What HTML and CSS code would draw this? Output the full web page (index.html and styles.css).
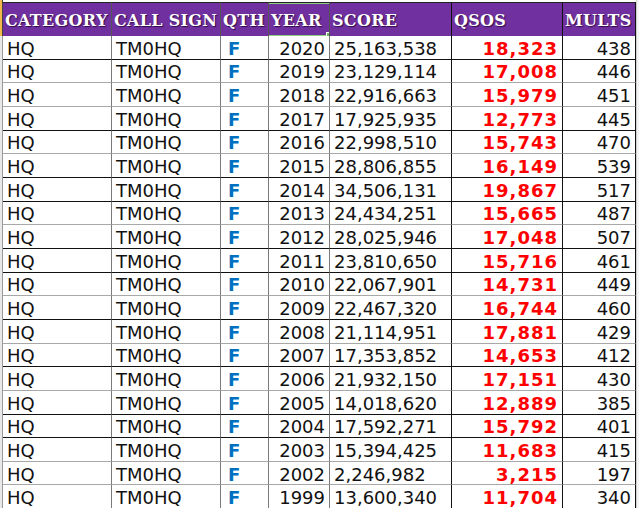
FILE: index.html
```html
<!DOCTYPE html>
<html>
<head>
<meta charset="utf-8">
<link rel="stylesheet" href="styles.css">
</head>
<body>
<div class="sheet">
  <div class="rowhead">
    <div class="rh-top"></div>
    <div class="rh-body"></div>
  </div>
  <div class="grid">
    <div class="hd">CATEGORY</div>
    <div class="hd">CALL SIGN</div>
    <div class="hd">QTH</div>
    <div class="hd sel">YEAR<span class="selbox"><span class="handle"></span></span></div>
    <div class="hd dk">SCORE</div>
    <div class="hd dk">QSOS</div>
    <div class="hd dk">MULTS</div>
  </div>
  <div class="grid body">
    <div class="c dark">HQ</div><div class="c dark">TM0HQ</div><div class="c q dark">F</div><div class="c r dark">2020</div><div class="c dk dark">25,163,538</div><div class="c r red dk dark">18,323</div><div class="c r dk dark">438</div>
    <div class="c">HQ</div><div class="c">TM0HQ</div><div class="c q">F</div><div class="c r">2019</div><div class="c dk">23,129,114</div><div class="c r red dk">17,008</div><div class="c r dk">446</div>
    <div class="c">HQ</div><div class="c">TM0HQ</div><div class="c q">F</div><div class="c r">2018</div><div class="c dk">22,916,663</div><div class="c r red dk">15,979</div><div class="c r dk">451</div>
    <div class="c dark">HQ</div><div class="c dark">TM0HQ</div><div class="c q dark">F</div><div class="c r dark">2017</div><div class="c dk dark">17,925,935</div><div class="c r red dk dark">12,773</div><div class="c r dk dark">445</div>
    <div class="c">HQ</div><div class="c">TM0HQ</div><div class="c q">F</div><div class="c r">2016</div><div class="c dk">22,998,510</div><div class="c r red dk">15,743</div><div class="c r dk">470</div>
    <div class="c dark">HQ</div><div class="c dark">TM0HQ</div><div class="c q dark">F</div><div class="c r dark">2015</div><div class="c dk dark">28,806,855</div><div class="c r red dk dark">16,149</div><div class="c r dk dark">539</div>
    <div class="c dark">HQ</div><div class="c dark">TM0HQ</div><div class="c q dark">F</div><div class="c r dark">2014</div><div class="c dk dark">34,506,131</div><div class="c r red dk dark">19,867</div><div class="c r dk dark">517</div>
    <div class="c">HQ</div><div class="c">TM0HQ</div><div class="c q">F</div><div class="c r">2013</div><div class="c dk">24,434,251</div><div class="c r red dk">15,665</div><div class="c r dk">487</div>
    <div class="c dark">HQ</div><div class="c dark">TM0HQ</div><div class="c q dark">F</div><div class="c r dark">2012</div><div class="c dk dark">28,025,946</div><div class="c r red dk dark">17,048</div><div class="c r dk dark">507</div>
    <div class="c dark">HQ</div><div class="c dark">TM0HQ</div><div class="c q dark">F</div><div class="c r dark">2011</div><div class="c dk dark">23,810,650</div><div class="c r red dk dark">15,716</div><div class="c r dk dark">461</div>
    <div class="c">HQ</div><div class="c">TM0HQ</div><div class="c q">F</div><div class="c r">2010</div><div class="c dk">22,067,901</div><div class="c r red dk">14,731</div><div class="c r dk">449</div>
    <div class="c dark">HQ</div><div class="c dark">TM0HQ</div><div class="c q dark">F</div><div class="c r dark">2009</div><div class="c dk dark">22,467,320</div><div class="c r red dk dark">16,744</div><div class="c r dk dark">460</div>
    <div class="c">HQ</div><div class="c">TM0HQ</div><div class="c q">F</div><div class="c r">2008</div><div class="c dk">21,114,951</div><div class="c r red dk">17,881</div><div class="c r dk">429</div>
    <div class="c dark">HQ</div><div class="c dark">TM0HQ</div><div class="c q dark">F</div><div class="c r dark">2007</div><div class="c dk dark">17,353,852</div><div class="c r red dk dark">14,653</div><div class="c r dk dark">412</div>
    <div class="c">HQ</div><div class="c">TM0HQ</div><div class="c q">F</div><div class="c r">2006</div><div class="c dk">21,932,150</div><div class="c r red dk">17,151</div><div class="c r dk">430</div>
    <div class="c dark">HQ</div><div class="c dark">TM0HQ</div><div class="c q dark">F</div><div class="c r dark">2005</div><div class="c dk dark">14,018,620</div><div class="c r red dk dark">12,889</div><div class="c r dk dark">385</div>
    <div class="c dark">HQ</div><div class="c dark">TM0HQ</div><div class="c q dark">F</div><div class="c r dark">2004</div><div class="c dk dark">17,592,271</div><div class="c r red dk dark">15,792</div><div class="c r dk dark">401</div>
    <div class="c">HQ</div><div class="c">TM0HQ</div><div class="c q">F</div><div class="c r">2003</div><div class="c dk">15,394,425</div><div class="c r red dk">11,683</div><div class="c r dk">415</div>
    <div class="c">HQ</div><div class="c">TM0HQ</div><div class="c q">F</div><div class="c r">2002</div><div class="c dk">2,246,982</div><div class="c r red dk">3,215</div><div class="c r dk">197</div>
    <div class="c">HQ</div><div class="c">TM0HQ</div><div class="c q">F</div><div class="c r">1999</div><div class="c dk">13,600,340</div><div class="c r red dk">11,704</div><div class="c r dk">340</div>
  </div>
  <div class="edge"></div>
</div>
</body>
</html>
```

FILE: styles.css
```css
html, body {
  margin: 0;
  padding: 0;
  background: #fff;
  overflow: hidden;
}
.sheet {
  position: relative;
  width: 639px;
  height: 508px;
  display: flex;
  flex-direction: column;
  padding-left: 3px;
  box-sizing: border-box;
}
.rowhead {
  position: absolute;
  left: 0;
  top: 0;
  width: 3px;
  height: 508px;
  display: flex;
  flex-direction: column;
}
.rh-top {
  height: 36px;
  background: #f2b84b;
  border-right: 1px solid #444;
  box-sizing: border-box;
}
.rh-body {
  flex: 1;
  background: #e8e8e8;
  border-right: 1px solid #9a9a9a;
  box-sizing: border-box;
}
.edge {
  position: absolute;
  right: 0;
  top: 0;
  width: 3px;
  height: 508px;
  background: #f4f4f4;
  border-left: 1px solid #d0d0d0;
  box-sizing: border-box;
}
.grid {
  display: grid;
  grid-template-columns: 109px 109px 48px 61px 122px 111px 73px;
  width: 633px;
}
.hd {
  position: relative;
  margin-top: 2px;
  height: 34px;
  background: #7030a0;
  border-top: 1px solid #222;
  border-right: 1px solid #555;
  box-sizing: border-box;
  display: flex;
  align-items: center;
  padding-left: 2px;
  padding-top: 1px;
  font-family: "DejaVu Serif", serif;
  font-weight: bold;
  font-size: 16px;
  color: #fff;
  letter-spacing: 0.3px;
  text-shadow: 1px 1px 1px rgba(30, 0, 50, 0.8);
  white-space: nowrap;
  overflow: hidden;
}
.hd.dk { border-right-color: #111; }
.selbox {
  position: absolute;
  left: -1px;
  top: 0;
  right: -1px;
  bottom: 0;
  border: 1px solid #8fcf80;
  box-sizing: border-box;
}
.handle {
  position: absolute;
  right: -3px;
  bottom: -3px;
  width: 4px;
  height: 4px;
  background: #6fae5f;
  border: 1px solid #fff;
}
.body {
  grid-auto-rows: 23.67px;
}
.c {
  border-right: 1px solid #7a7a7a;
  border-bottom: 1px solid #a8a8a8;
  box-sizing: border-box;
  display: flex;
  align-items: center;
  padding: 2px 4px 0 4px;
  font-family: "DejaVu Sans", Verdana, sans-serif;
  font-size: 18px;
  color: #111;
  white-space: nowrap;
  overflow: hidden;
}
.c.dark { border-bottom-color: #111; }
.c.dk { border-right-color: #111; }
.c.r { justify-content: flex-end; padding-right: 4px; }
.c.q {
  color: #0070c0;
  font-weight: bold;
  padding-left: 7px;
}
.c.red {
  color: #ff0000;
  font-weight: bold;
  letter-spacing: 1px;
  padding-right: 4px;
}
```
